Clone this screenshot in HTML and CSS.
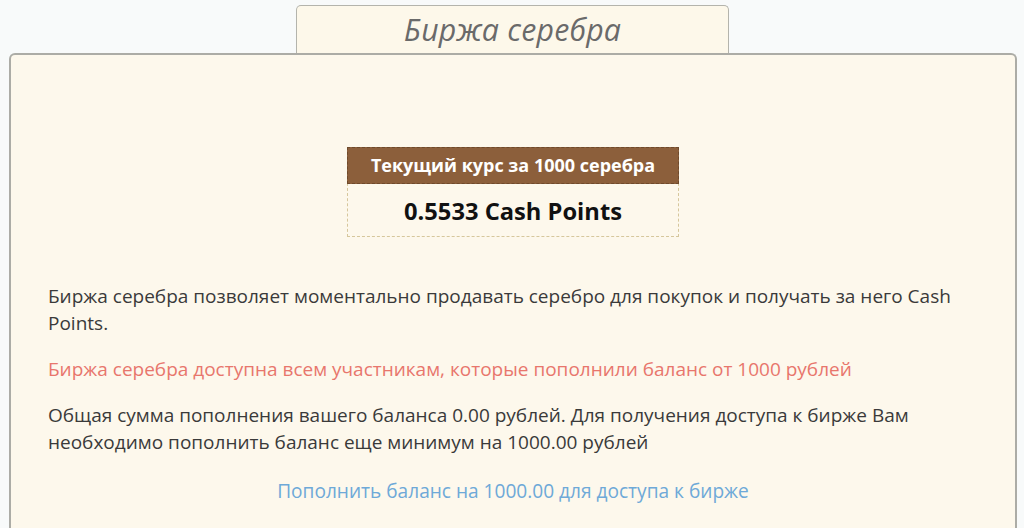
FILE: index.html
```html
<!DOCTYPE html>
<html lang="ru">
<head>
<meta charset="utf-8">
<title>Биржа серебра</title>
<link rel="stylesheet" href="styles.css">
</head>
<body>
<div class="page">
  <div class="tab"><h1 class="tab-title">Биржа серебра</h1></div>
  <div class="panel">
    <div class="rate">
      <div class="rate-head">Текущий курс за 1000 серебра</div>
      <div class="rate-value">0.5533 Cash Points</div>
    </div>
    <p class="text">Биржа серебра позволяет моментально продавать серебро для покупок и получать за него Cash Points.</p>
    <p class="text warn">Биржа серебра доступна всем участникам, которые пополнили баланс от 1000 рублей</p>
    <p class="text">Общая сумма пополнения вашего баланса 0.00 рублей. Для получения доступа к бирже Вам необходимо пополнить баланс еще минимум на 1000.00 рублей</p>
    <p class="link-row"><a class="link" href="#">Пополнить баланс на 1000.00 для доступа к бирже</a></p>
  </div>
</div>
</body>
</html>
```
FILE: styles.css
```css
html, body {
  margin: 0;
  padding: 0;
  background: #f8fafa;
  overflow: hidden;
  height: 528px;
}
body {
  font-family: "Open Sans", "Liberation Sans", sans-serif;
  color: #333;
}
.page {
  padding: 5px 7px 0 9px;
}
.tab {
  margin-left: 287px;
  width: 431px;
  height: 47px;
  background: #fdf8ea;
  border: 1.5px solid #b4b4ac;
  border-bottom: none;
  border-radius: 5px 5px 0 0;
  display: flex;
  align-items: center;
  justify-content: center;
}
.tab-title {
  margin: 0;
  font-family: "Open Sans", sans-serif;
  font-style: italic;
  font-weight: 400;
  font-size: 30.3px;
  color: #6a6a6a;
  letter-spacing: 0.2px;
}
.panel {
  background: #fdf8ec;
  border: 2px solid #acaca6;
  border-radius: 6px 6px 0 0;
  border-bottom: none;
  height: 480px;
  padding: 92px 37px 0 37px;
  box-sizing: border-box;
}
.rate {
  width: 330px;
  margin: 0 auto;
  border: 1px dashed #d6c79c;
  text-align: center;
}
.rate-head {
  background: #8c5f3b;
  color: #fff;
  font-weight: 700;
  font-size: 18px;
  height: 35px;
  line-height: 35px;
  border: 1px dashed #6e4a2c;
  margin: -1px -1px 0 -1px;
}
.rate-value {
  font-weight: 700;
  font-size: 23.7px;
  color: #111;
  height: 52px;
  line-height: 54px;
}
.text {
  margin: 46px 0 0 0;
  font-size: 19px;
  line-height: 27px;
  color: #3a3a3a;
}
.text + .text {
  margin-top: 19px;
}
.warn {
  color: #e8766c;
}
.link-row {
  margin: 22px 0 0 0;
  text-align: center;
  font-size: 19.1px;
  line-height: 27px;
}
.link {
  color: #6ea9d8;
  text-decoration: none;
}
```
